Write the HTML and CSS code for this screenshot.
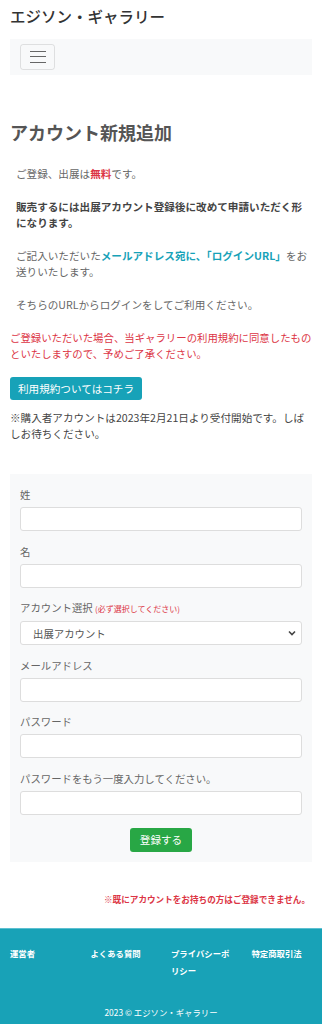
FILE: index.html
```html
<!DOCTYPE html>
<html lang="ja">
<head>
    <meta charset="UTF-8">
    <meta name="viewport" content="width=device-width, initial-scale=1.0">
    <title>アカウント新規追加 | エジソン・ギャラリー</title>
    <link rel="stylesheet" href="styles.css">
</head>
<body>
    <header class="site-header">
        <div class="site-title">エジソン・ギャラリー</div>
        <nav class="navbar">
            <button type="button" class="navbar-toggler" aria-label="menu">
                <span class="toggler-icon"></span>
            </button>
        </nav>
    </header>

    <main class="content">
        <h1>アカウント新規追加</h1>

        <p class="lead-text">ご登録、出展は<span class="free">無料</span>です。</p>
        <p class="lead-text strong">販売するには出展アカウント登録後に改めて申請いただく形になります。</p>
        <p class="lead-text">ご記入いただいた<span class="hl">メールアドレス宛に、「ログインURL」</span>をお送りいたします。</p>
        <p class="lead-text">そちらのURLからログインをしてご利用ください。</p>

        <p class="notice">ご登録いただいた場合、当ギャラリーの利用規約に同意したものといたしますので、予めご了承ください。</p>

        <a href="#" class="btn btn-info">利用規約ついてはコチラ</a>

        <p class="buyer-note">※購入者アカウントは2023年2月21日より受付開始です。しばしお待ちください。</p>

        <form class="register-form">
            <div class="form-group">
                <label for="last_name">姓</label>
                <input type="text" id="last_name">
            </div>
            <div class="form-group">
                <label for="first_name">名</label>
                <input type="text" id="first_name">
            </div>
            <div class="form-group">
                <label for="account_type">アカウント選択 <small class="required">(必ず選択してください)</small></label>
                <select id="account_type">
                    <option>出展アカウント</option>
                </select>
            </div>
            <div class="form-group">
                <label for="email">メールアドレス</label>
                <input type="email" id="email">
            </div>
            <div class="form-group">
                <label for="password">パスワード</label>
                <input type="password" id="password">
            </div>
            <div class="form-group">
                <label for="password_confirm">パスワードをもう一度入力してください。</label>
                <input type="password" id="password_confirm">
            </div>
            <div class="form-submit">
                <button type="submit" class="btn btn-success">登録する</button>
            </div>
        </form>

        <p class="exist-note">※既にアカウントをお持ちの方はご登録できません。</p>
    </main>

    <footer class="site-footer">
        <ul class="footer-links">
            <li><a href="#">運営者</a></li>
            <li><a href="#">よくある質問</a></li>
            <li><a href="#">プライバシーポリシー</a></li>
            <li><a href="#">特定商取引法</a></li>
        </ul>
        <p class="copyright">2023 © エジソン・ギャラリー</p>
    </footer>
</body>
</html>
```

FILE: styles.css
```css
* {
    box-sizing: border-box;
}
body {
    margin: 0;
    font-family: "Noto Sans CJK JP", "Noto Sans", sans-serif;
    color: #555;
    background: #fff;
}
.site-title {
    padding: 5px 10px 0;
    height: 39px;
    font-size: 15.5px;
    line-height: 22px;
    font-weight: 500;
    color: #333;
}
.navbar {
    margin: 0 10px;
    height: 36px;
    padding: 5px 10px;
    background-color: #f8f9fa;
}
.navbar-toggler {
    width: 35px;
    height: 26px;
    padding: 0;
    background: transparent;
    border: 1px solid rgba(0, 0, 0, 0.1);
    border-radius: 3px;
    display: flex;
    align-items: center;
    justify-content: center;
}
.toggler-icon {
    display: block;
    width: 16px;
    height: 12px;
    border-top: 1.2px solid #666;
    border-bottom: 1.2px solid #666;
    position: relative;
}
.toggler-icon::after {
    content: "";
    position: absolute;
    left: 0;
    right: 0;
    top: 4.2px;
    border-top: 1.2px solid #666;
}
.content {
    padding: 0 10px;
}
h1 {
    margin: 46px 0 23px;
    font-size: 18px;
    line-height: 22px;
    font-weight: 700;
    color: #555;
}
.lead-text {
    margin: 0 0 17px;
    padding-left: 6px;
    font-size: 10.6px;
    line-height: 16px;
    color: #666;
}
.lead-text.strong {
    font-weight: 700;
    color: #444;
}
.free {
    color: #dc3545;
    font-weight: 700;
}
.hl {
    color: #17a2b8;
    font-weight: 700;
}
.notice {
    margin: 0 0 12px;
    font-size: 10.4px;
    line-height: 16px;
    color: #dc3545;
}
.btn {
    display: inline-block;
    border: none;
    border-radius: 3px;
    color: #fff;
    text-decoration: none;
    font-family: inherit;
    font-size: 10.6px;
    line-height: 23px;
    padding: 0 8px;
}
.btn-info {
    background-color: #17a2b8;
}
.btn-success {
    background-color: #28a745;
    padding: 0 10px;
    line-height: 24px;
}
.buyer-note {
    margin: 10px 0 32px;
    font-size: 10.6px;
    line-height: 16px;
    color: #444;
}
.register-form {
    background-color: #f8f9fa;
    padding: 10px 10px 10px;
}
.form-group {
    margin-bottom: 9.6px;
}
.form-group label {
    display: block;
    font-size: 10.4px;
    line-height: 16px;
    padding-top: 3px;
    margin-bottom: 4px;
    color: #666;
}
.required {
    font-size: 8px;
    color: #dc3545;
}
.form-group input,
.form-group select {
    display: block;
    width: 100%;
    height: 24px;
    padding: 0 12px;
    border: 1px solid #ddd;
    border-radius: 3px;
    background-color: #fff;
    font-family: inherit;
    font-size: 10.4px;
    color: #555;
}
.form-group select {
    appearance: none;
    background-image: url("data:image/svg+xml,%3Csvg xmlns='http://www.w3.org/2000/svg' width='8' height='6' viewBox='0 0 8 6'%3E%3Cpath d='M1 1.5l3 3 3-3' fill='none' stroke='%23444' stroke-width='1.6'/%3E%3C/svg%3E");
    background-repeat: no-repeat;
    background-position: right 5px center;
}
.form-submit {
    text-align: center;
}
.exist-note {
    margin: 29px 2px 21px 0;
    text-align: right;
    font-size: 8.6px;
    line-height: 16px;
    font-weight: 700;
    color: #dc3545;
}
.site-footer {
    background-color: #18a2b7;
    border-top: 1px solid #5cc0d1;
    padding: 16px 0 6px;
    color: #fff;
}
.footer-links {
    list-style: none;
    margin: 0;
    padding: 0;
    display: grid;
    grid-template-columns: repeat(4, 1fr);
}
.footer-links li {
    padding: 0 10px;
    font-size: 8.4px;
    line-height: 17px;
    font-weight: 700;
}
.footer-links a {
    color: #fff;
    text-decoration: none;
}
.copyright {
    margin: 25px 0 0;
    text-align: center;
    font-size: 8.4px;
    line-height: 16px;
}
```
